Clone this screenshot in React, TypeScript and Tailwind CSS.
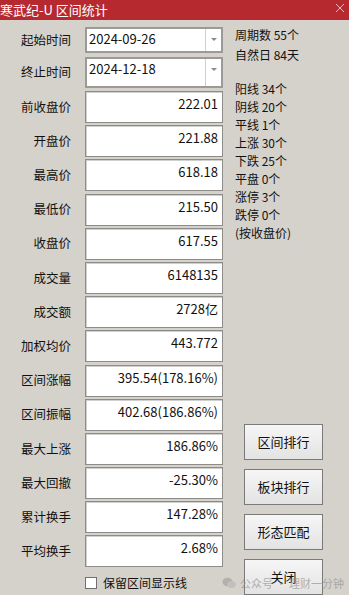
const font = "font-['Noto_Sans_CJK_SC','Noto_Sans',sans-serif]"

const rows: [string, string][] = [
  ['前收盘价', '222.01'],
  ['开盘价', '221.88'],
  ['最高价', '618.18'],
  ['最低价', '215.50'],
  ['收盘价', '617.55'],
  ['成交量', '6148135'],
  ['成交额', '2728亿'],
  ['加权均价', '443.772'],
  ['区间涨幅', '395.54(178.16%)'],
  ['区间振幅', '402.68(186.86%)'],
  ['最大上涨', '186.86%'],
  ['最大回撤', '-25.30%'],
  ['累计换手', '147.28%'],
  ['平均换手', '2.68%'],
]

const counts = ['阳线 34个', '阴线 20个', '平线 1个', '上涨 30个', '下跌 25个', '平盘 0个', '涨停 3个', '跌停 0个', '(按收盘价)']

const buttons = ['区间排行', '板块排行', '形态匹配', '关闭']

function DateBox({ value, tall }: { value: string; tall?: boolean }) {
  return (
    <div className={`flex w-[138px] border-2 border-[#9c9a96] bg-white ${tall ? 'h-[31px]' : 'h-[26px]'}`}>
      <div className="flex-1 pl-[2px] pt-[2px] text-[13px] leading-[16px] text-[#111]">{value}</div>
      <div className="flex w-[16px] items-start justify-center border-l border-[#cfcfcf] pt-[9px]">
        <div className="h-0 w-0 border-x-[3px] border-t-[3px] border-x-transparent border-t-[#8a8a8a]" />
      </div>
    </div>
  )
}

export default function App() {
  return (
    <div className={`relative h-[595px] w-[349px] overflow-hidden bg-[#d5d2cc] ${font}`}>
      <div className="flex h-[20px] items-center justify-between bg-[#b62a2f] pr-[4px]">
        <span className="text-[13px] leading-[20px] text-white">寒武纪-U 区间统计</span>
        <svg width="10" height="10" viewBox="0 0 10 10" className="mb-[4px]">
          <path d="M1 1 L9 9 M9 1 L1 9" stroke="#f2b9bb" strokeWidth="1" />
        </svg>
      </div>

      <div className="flex">
        <div className="flex w-[235px] flex-col">
          <div className="mt-[7px] flex items-center">
            <span className="w-[71px] text-right text-[12.5px] text-[#111]">起始时间</span>
            <div className="ml-[14px]"><DateBox value="2024-09-26" /></div>
          </div>
          <div className="mt-[4px] flex items-center">
            <span className="w-[71px] text-right text-[12.5px] text-[#111]">终止时间</span>
            <div className="ml-[14px]"><DateBox value="2024-12-18" tall /></div>
          </div>

          <div className="mt-[3px] flex flex-col gap-[2.2px]">
            {rows.map(([label, value]) => (
              <div key={label} className="flex items-center">
                <span className="w-[71px] text-right text-[12.5px] text-[#111]">{label}</span>
                <div className="ml-[14px] h-[32px] w-[138px] border border-[#8e8c88] bg-white pr-[4px] pt-[4px] text-right text-[13px] leading-[16px] text-[#111] shadow-[inset_1px_1px_0_#d0d0d0]">
                  {value}
                </div>
              </div>
            ))}
          </div>

          <div className="ml-[85px] mt-[9px] flex items-center gap-[6px]">
            <div className="h-[12px] w-[12px] border border-[#6f6f6f] bg-white" />
            <span className="text-[12px] leading-[14px] text-[#111]">保留区间显示线</span>
          </div>
        </div>

        <div className="flex flex-col">
          <div className="mt-[5px] text-[12px] leading-[20px] text-[#111]">
            <div>周期数 55个</div>
            <div>自然日 84天</div>
          </div>
          <div className="mt-[15px] text-[12px] leading-[18px] text-[#111]">
            {counts.map((c) => (
              <div key={c}>{c}</div>
            ))}
          </div>
          <div className="ml-[9px] mt-[182px] flex flex-col gap-[9px]">
            {buttons.map((b) => (
              <button
                key={b}
                className="h-[36px] w-[79px] border border-[#7a7a7a] bg-gradient-to-b from-[#f6f6f6] to-[#e3e3e3] text-[13px] text-[#111]"
              >
                {b}
              </button>
            ))}
          </div>
        </div>
      </div>

      <div className="absolute left-[222px] top-[576px] flex items-center gap-[4px] opacity-60">
        <svg width="14" height="12" viewBox="0 0 14 12">
          <ellipse cx="5.5" cy="5" rx="5" ry="4.2" fill="#9a9a9a" />
          <ellipse cx="9.5" cy="7.5" rx="4.2" ry="3.6" fill="#b5b5b5" />
        </svg>
        <span className="text-[11px] leading-[14px] text-[#8a8a8a]">公众号 · 理财一分钟</span>
      </div>
    </div>
  )
}
